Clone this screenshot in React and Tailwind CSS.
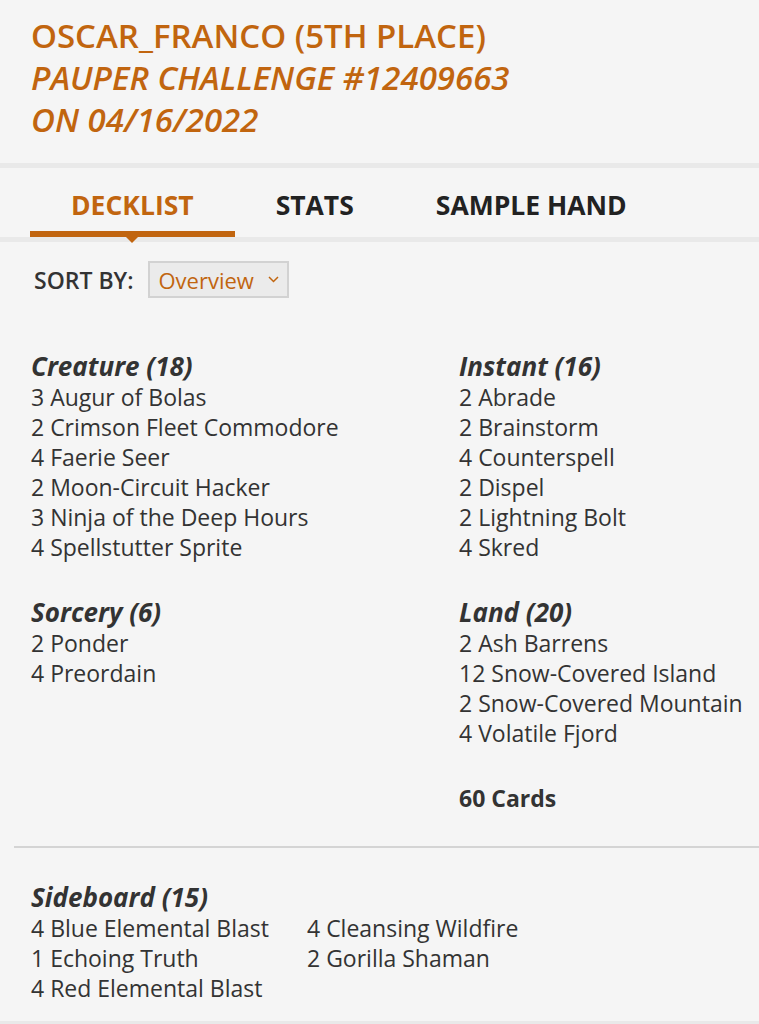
import React from 'react';

const mainDeck = {
  left: [
    {
      title: 'Creature (18)',
      cards: ['3 Augur of Bolas', '2 Crimson Fleet Commodore', '4 Faerie Seer', '2 Moon-Circuit Hacker', '3 Ninja of the Deep Hours', '4 Spellstutter Sprite'],
    },
    {
      title: 'Sorcery (6)',
      cards: ['2 Ponder', '4 Preordain'],
    },
  ],
  right: [
    {
      title: 'Instant (16)',
      cards: ['2 Abrade', '2 Brainstorm', '4 Counterspell', '2 Dispel', '2 Lightning Bolt', '4 Skred'],
    },
    {
      title: 'Land (20)',
      cards: ['2 Ash Barrens', '12 Snow-Covered Island', '2 Snow-Covered Mountain', '4 Volatile Fjord'],
    },
  ],
};

const sideboard = [
  ['4 Blue Elemental Blast', '1 Echoing Truth', '4 Red Elemental Blast'],
  ['4 Cleansing Wildfire', '2 Gorilla Shaman'],
];

const tabs = ['DECKLIST', 'STATS', 'SAMPLE HAND'];

const Section = ({ title, cards }) => (
  <div className="mb-[35px] last:mb-0">
    <h3 className="font-bold italic text-[26px] leading-[31px]">{title}</h3>
    {cards.map((card, i) => (
      <div key={i}>{card}</div>
    ))}
  </div>
);

const App = () => {
  return (
    <div className="min-h-screen bg-[#f5f5f5] text-[#333] font-['Open_Sans',sans-serif] text-[23px] leading-[30px] overflow-hidden">
      <header className="pt-[15px] pb-[22px] pl-[31px]">
        <h1 className="text-[#c1650f] text-[33px] leading-[42px] font-semibold">
          <div>OSCAR_FRANCO (5TH PLACE)</div>
          <div className="italic">PAUPER CHALLENGE #12409663</div>
          <div className="italic">ON 04/16/2022</div>
        </h1>
      </header>

      <div className="h-[5px] bg-[#e9e9e9]" />

      <nav className="relative z-10 flex pl-[30px]">
        {tabs.map((tab, i) => (
          <div
            key={tab}
            className={
              i === 0
                ? 'relative px-[41px] pt-[19px] pb-[8px] border-b-[6px] border-[#c1650f] text-[#c1650f] text-[26.5px] leading-[36px] font-bold'
                : 'relative px-[41px] pt-[19px] pb-[14px] text-[#222] text-[26.5px] leading-[36px] font-bold'
            }
          >
            {tab}
            {i === 0 && (
              <span className="absolute left-1/2 top-full -translate-x-1/2 w-0 h-0 border-l-[12px] border-r-[12px] border-t-[12px] border-l-transparent border-r-transparent border-t-[#c1650f]" />
            )}
          </div>
        ))}
      </nav>

      <div className="h-[5px] bg-[#e9e9e9]" />

      <div className="flex items-center gap-[15px] pl-[34px] pt-[19px]">
        <span className="font-semibold">SORT BY:</span>
        <div className="flex items-center gap-[14px] h-[37px] pl-[8px] pr-[8px] bg-[#ebebeb] border-2 border-[#d2d2d2] text-[#c1650f] text-[22px]">
          <span>Overview</span>
          <svg width="11" height="7" viewBox="0 0 11 7" fill="none" stroke="#c1650f" strokeWidth="1.5">
            <path d="M1 1l4.5 4.5L10 1" />
          </svg>
        </div>
      </div>

      <div className="flex pl-[31px] mt-[53px]">
        <div className="w-[428px] shrink-0">
          {mainDeck.left.map((s) => (
            <Section key={s.title} {...s} />
          ))}
        </div>
        <div className="flex-1 whitespace-nowrap">
          {mainDeck.right.map((s) => (
            <Section key={s.title} {...s} />
          ))}
          <div className="mt-[34px] font-bold">60 Cards</div>
        </div>
      </div>

      <div className="ml-[14px] mt-[33px] h-[2px] bg-[#d4d4d4]" />

      <div className="pl-[31px] pt-[34px] pb-[18px]">
        <h3 className="font-bold italic text-[26px] leading-[31px]">Sideboard (15)</h3>
        <div className="flex">
          {sideboard.map((col, i) => (
            <div key={i} className={i === 0 ? 'w-[276px]' : ''}>
              {col.map((card, j) => (
                <div key={j}>{card}</div>
              ))}
            </div>
          ))}
        </div>
      </div>

      <div className="h-[5px] bg-[#e9e9e9]" />
    </div>
  );
};

export default App;
